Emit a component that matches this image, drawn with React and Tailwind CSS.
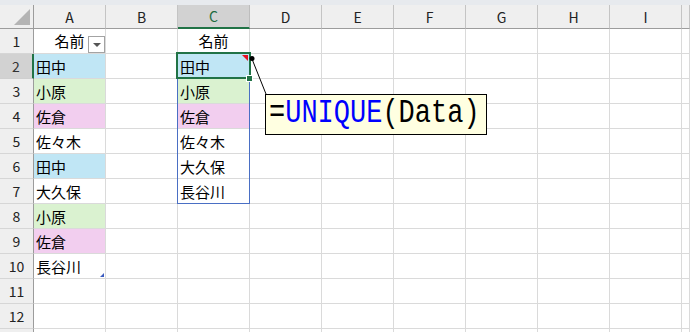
const COLS = ["A", "B", "C", "D", "E", "F", "G", "H", "I", ""];

const BLUE = "bg-[#c0e6f5]";
const GREEN = "bg-[#daf2d0]";
const PINK = "bg-[#f2ceef]";

// cell contents by row number
const CELLS = {
  2: { A: ["田中", BLUE], C: ["田中", BLUE] },
  3: { A: ["小原", GREEN], C: ["小原", GREEN] },
  4: { A: ["佐倉", PINK], C: ["佐倉", PINK] },
  5: { A: ["佐々木", ""], C: ["佐々木", ""] },
  6: { A: ["田中", BLUE], C: ["大久保", ""] },
  7: { A: ["大久保", ""], C: ["長谷川", ""] },
  8: { A: ["小原", GREEN] },
  9: { A: ["佐倉", PINK] },
  10: { A: ["長谷川", ""] },
};

const ROWS = [1, 2, 3, 4, 5, 6, 7, 8, 9, 10, 11, 12, 13];

function HeaderRow() {
  return (
    <>
      <div className="h-[24px] bg-[#efefef] border-r border-b border-[#9c9c9c] relative">
        <div className="absolute left-[14px] top-[4px] w-0 h-0 border-l-[16px] border-l-transparent border-b-[16px] border-b-[#b4b4b4]" />
      </div>
      {COLS.map((c) =>
        c === "C" ? (
          <div
            key="hC"
            className="h-[24px] bg-[#d2d2d2] border-r border-r-[#bdbdbd] border-b-2 border-b-[#217346] flex items-center justify-center text-[14px] text-[#1e6b40]"
          >
            C
          </div>
        ) : (
          <div
            key={"h" + c}
            className="h-[24px] bg-[#efefef] border-r border-r-[#c4c4c4] border-b border-b-[#9c9c9c] flex items-center justify-center text-[14px] text-[#222]"
          >
            {c}
          </div>
        )
      )}
    </>
  );
}

function Row({ n }) {
  const data = CELLS[n] || {};
  // last row is only a sliver at the bottom edge, its number is not visible
  const label = n < 13 ? n : "";
  return (
    <>
      {n === 2 ? (
        <div className="h-[25px] bg-[#d2d2d2] border-r-2 border-r-[#217346] border-b border-b-[#cfcfcf] flex items-center justify-center text-[14px] text-[#333]">
          {label}
        </div>
      ) : (
        <div className="h-[25px] bg-[#efefef] border-r border-r-[#9c9c9c] border-b border-b-[#d6d6d6] flex items-center justify-center text-[14px] text-[#222]">
          {label}
        </div>
      )}
      {COLS.map((c) => {
        if (n === 1 && c === "A") {
          return (
            <div
              key={c}
              className="h-[25px] border-r border-b border-[#dadada] relative flex items-center justify-center text-[15px] pb-[1px]"
            >
              名前
              <div className="absolute left-[54px] top-[7px] w-[17px] h-[17px] border border-[#a3a3a3] bg-white flex items-center justify-center">
                <div className="w-0 h-0 border-l-[4px] border-r-[4px] border-t-[4px] border-l-transparent border-r-transparent border-t-[#555]" />
              </div>
            </div>
          );
        }
        if (n === 1 && c === "C") {
          return (
            <div
              key={c}
              className="h-[25px] border-r border-b border-[#dadada] flex items-center justify-center text-[15px] pb-[1px]"
            >
              名前
            </div>
          );
        }
        const cell = data[c];
        return (
          <div
            key={c}
            className={
              "h-[25px] border-r border-b border-[#dadada] flex items-center pl-[2px] text-[15px] relative " +
              (cell ? cell[1] : "")
            }
          >
            {cell ? cell[0] : ""}
            {n === 10 && c === "A" && (
              <div className="absolute right-[1px] bottom-[1px] w-0 h-0 border-l-[4px] border-l-transparent border-b-[4px] border-b-[#3c5cc0]" />
            )}
          </div>
        );
      })}
    </>
  );
}

export default function App() {
  return (
    <div
      className="relative w-[690px] h-[332px] overflow-hidden bg-white text-black"
      style={{ fontFamily: '"Noto Sans", "Noto Sans CJK JP", sans-serif' }}
    >
      <div className="h-[5px] bg-[#e7eaee]" />
      <div
        className="grid grid-cols-[34px_repeat(9,72px)_1fr] leading-none"
        style={{ fontFamily: '"Noto Sans CJK JP", "Noto Sans", sans-serif' }}
      >
        <HeaderRow />
        {ROWS.map((n) => (
          <Row key={n} n={n} />
        ))}
      </div>

      {/* spill range outline */}
      <div className="absolute left-[177px] top-[53px] w-[73px] h-[151px] border border-[#4a6fc4] pointer-events-none" />

      {/* active cell C2 */}
      <div className="absolute left-[176px] top-[52px] w-[75px] h-[27px] border-2 border-[#217346]">
        <div className="absolute right-[1px] top-[1px] w-0 h-0 border-l-[6px] border-l-transparent border-t-[6px] border-t-[#e81123]" />
      </div>
      <div className="absolute left-[246px] top-[75px] w-[7px] h-[7px] bg-[#217346] border border-white" />

      {/* callout leader */}
      <svg className="absolute left-0 top-0" width="690" height="332">
        <line x1="252" y1="59" x2="266" y2="94" stroke="#000" strokeWidth="1" />
        <circle cx="252" cy="58.5" r="2.5" fill="#000" />
      </svg>

      {/* callout */}
      <div className="absolute left-[265px] top-[94px] w-[222px] h-[41px] border border-black bg-[#ffffe1] flex items-center pl-[3px] overflow-hidden">
        <span
          className="inline-block text-[27px] leading-none scale-y-120 origin-center"
          style={{ fontFamily: '"Liberation Mono", monospace' }}
        >
          =<span className="text-[#0000ff]">UNIQUE</span>(Data)
        </span>
      </div>
    </div>
  );
}
